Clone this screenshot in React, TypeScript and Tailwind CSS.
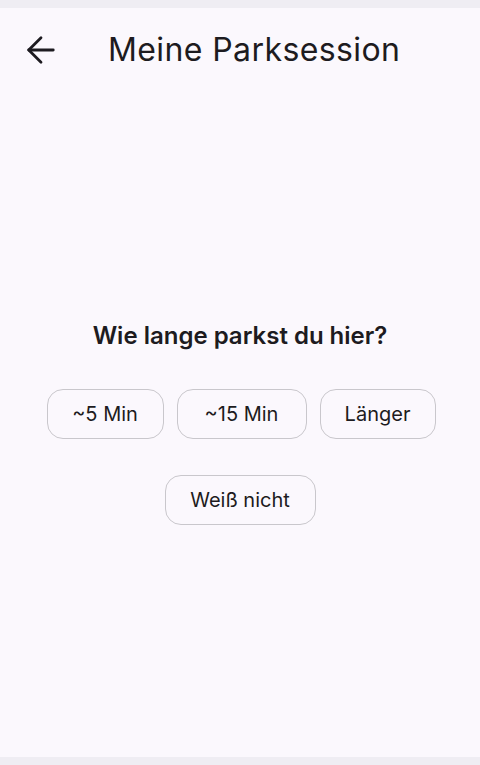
import { ArrowLeft } from 'lucide-react'

const Choice = ({ label, w }: { label: string; w: string }) => (
    <button className={`h-[50px] ${w} rounded-[16px] border border-[#c9c7cc] text-[20px] text-[#1d1b20] bg-transparent`}>
        {label}
    </button>
)

export default function App() {
    return (
        <div className="h-[765px] w-[480px] flex flex-col bg-[#fbf8fd] font-['Inter',sans-serif] text-[#1d1b20]">
            <div className="h-2 bg-[#efedf3]"></div>
            <div className="h-[84px] flex items-center">
                <ArrowLeft className="ml-[20px] w-[42px] h-[42px]" strokeWidth={1.6} />
                <div className="ml-[46px] text-[32px] leading-none tracking-[0.4px]">Meine Parksession</div>
            </div>
            <div className="mt-[230px] flex flex-col items-center">
                <div className="text-[24px] leading-[28px] font-semibold">Wie lange parkst du hier?</div>
                <div className="mt-[39px] flex gap-[13px] pl-[2px]">
                    <Choice label="~5 Min" w="w-[117px]" />
                    <Choice label="~15 Min" w="w-[130px]" />
                    <Choice label="Länger" w="w-[116px]" />
                </div>
                <div className="mt-[36px]">
                    <Choice label="Weiß nicht" w="w-[151px]" />
                </div>
            </div>
            <div className="flex-1"></div>
            <div className="h-2 bg-[#efedf3]"></div>
        </div>
    )
}
